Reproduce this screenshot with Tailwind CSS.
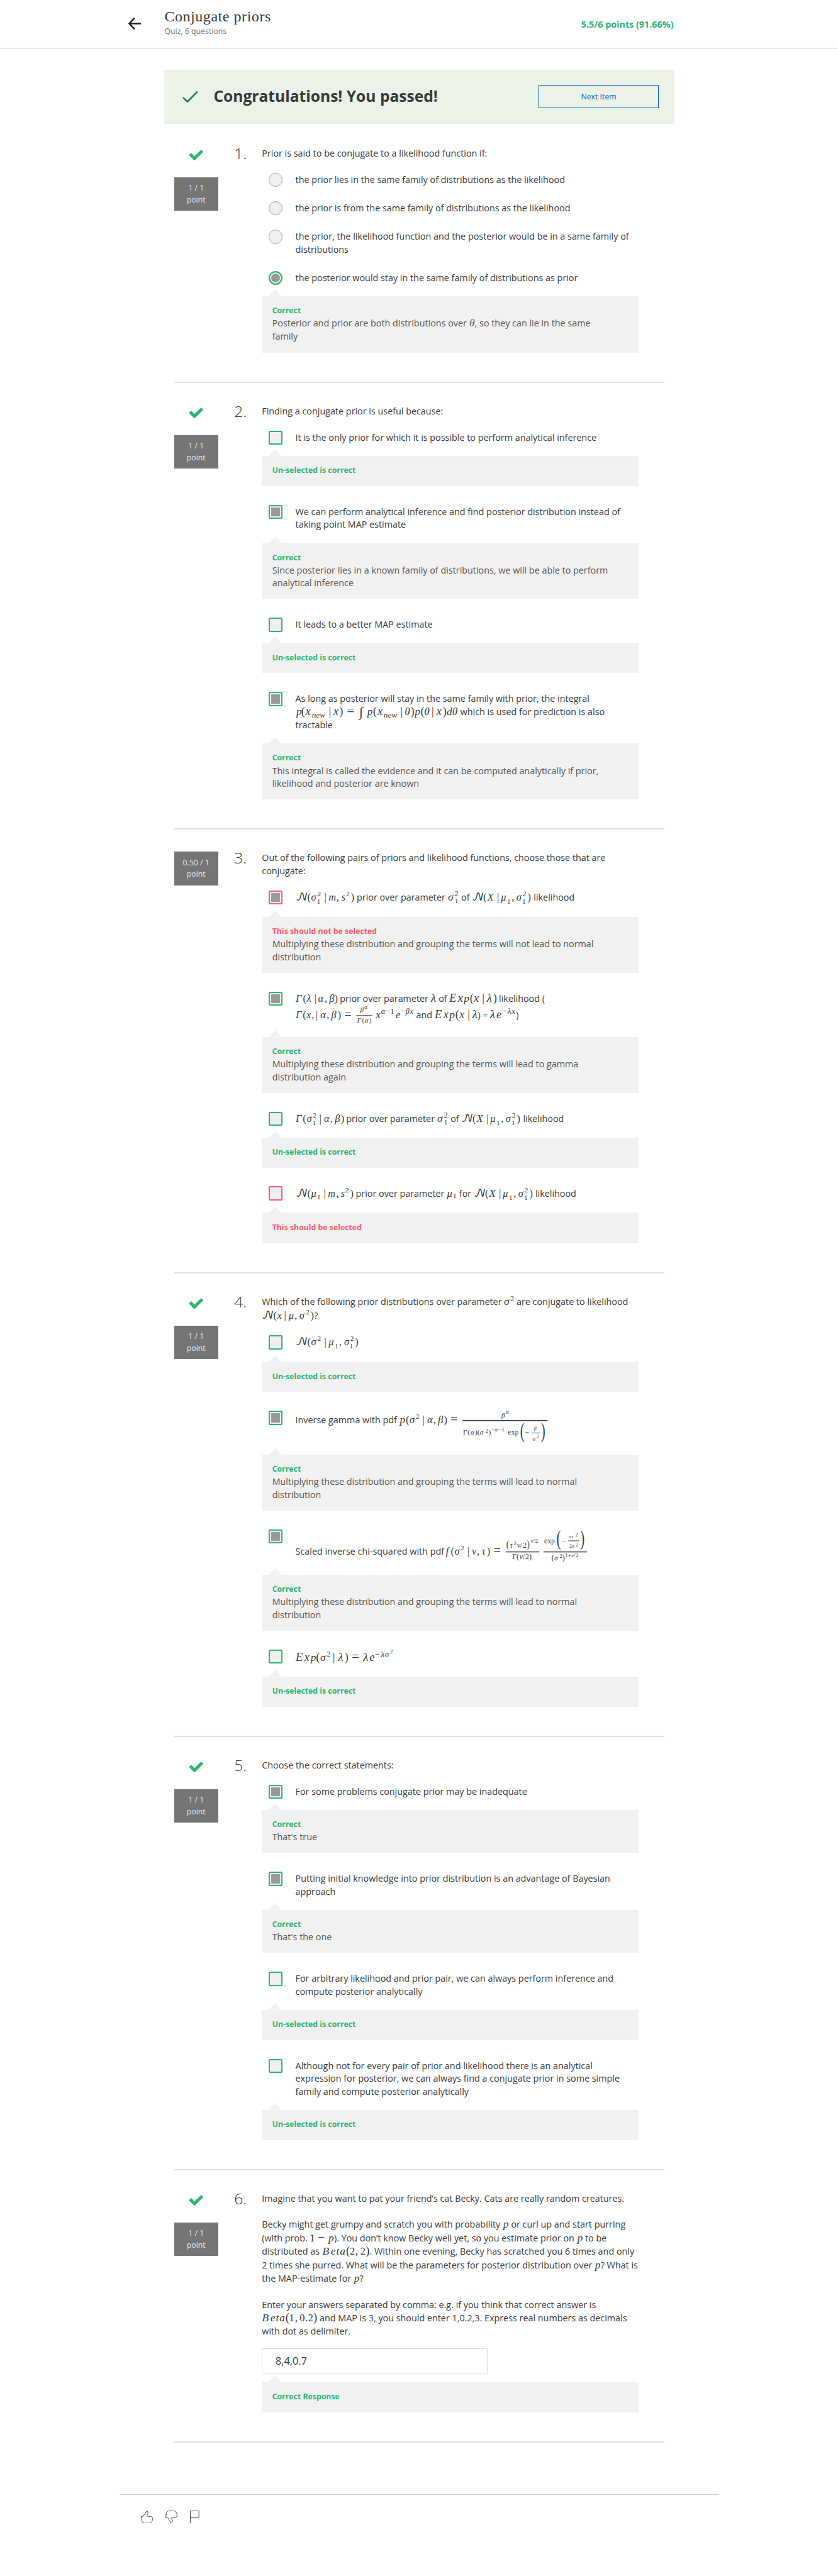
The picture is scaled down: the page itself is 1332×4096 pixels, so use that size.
<!DOCTYPE html>
<html lang="en">
<head>
<meta charset="utf-8">
<title>Conjugate priors</title>
<script src="https://cdn.jsdelivr.net/npm/@tailwindcss/browser@4"></script>
</head>
<body class="bg-white overflow-x-hidden">
<div class="[zoom:1.0254] w-[1299px] h-[3994px] overflow-hidden bg-white font-['Open_Sans',sans-serif] text-[14px] leading-[20px] text-[#373a3c]">

<header class="h-[74px] flex pl-[198px] pr-[255px] shadow-[0_1px_2px_rgba(0,0,0,0.45)]">
  <svg class="mt-[25px] w-[22px] h-[22px] shrink-0" viewBox="0 0 22 22" fill="none" stroke="#1f1f1f" stroke-width="2.5"><path d="M20.6 11.2H2.6M10.6 2.6 2.4 11.2l8.2 8.6"/></svg>
  <div class="ml-[35px]">
    <div class="mt-[13px] h-[26px] leading-[26px] text-[23.5px] tracking-[0.5px] font-['Source_Serif_Pro','Liberation_Serif',serif] whitespace-nowrap">Conjugate priors</div>
    <div class="mt-[1px] text-[12px] leading-[18px] text-[#757575]">Quiz, 6 questions</div>
  </div>
  <div class="ml-auto mt-[28px] font-bold text-[#2ab673]">5.5/6 points (91.66%)</div>
</header>

<div class="ml-[255px] mt-[34px] mb-[2px] w-[790px] h-[84px] bg-[#eaf3e6] flex items-center pl-[27px] pr-[24px]">
  <svg class="w-[26px] h-[20px] shrink-0" viewBox="0 0 26 20" fill="none" stroke="#1d7c50" stroke-width="2.5"><path d="M2 10.8 8.8 17.2 24.2 1.6"/></svg>
  <h1 class="ml-[23px] text-[24px] leading-[32px] font-bold whitespace-nowrap">Congratulations! You passed!</h1>
  <button class="ml-auto w-[186px] h-[36px] border border-[#0056be] text-[#1058c0] text-[12px] leading-[18px]">Next Item</button>
</div>

<main id="quiz" class="ml-[270px] w-[760px]"></main>

<footer class="mt-[80px] ml-[185px] w-[930px] border-t border-[#ccc] pt-[24px] pl-[33px] flex">
  <svg class="w-[19px] h-[20px]" viewBox="0 0 19 20" fill="none" stroke="#373a42" stroke-width=".9"><path d="M.4 9H3.4L9 .5C10.3 1.1 11 2.4 11 4 11 5.7 9.2 7 9.3 8.3 9.3 8.8 9.6 9 10.2 9H14.8C17 9 18 10.700 18 13 18 15.8 16.6 18.4 14.3 19.5H5.7C3.6 19.5 2 18.2 1.6 16.2Z"/></svg>
  <svg class="ml-[20px] w-[19px] h-[20px]" viewBox="0 0 19 20" fill="none" stroke="#373a42" stroke-width=".9"><g transform="matrix(1 0 0 -1 0 20)"><path d="M.4 9H3.4L9 .5C10.3 1.1 11 2.4 11 4 11 5.7 9.2 7 9.3 8.3 9.3 8.8 9.6 9 10.2 9H14.8C17 9 18 10.700 18 13 18 15.8 16.6 18.4 14.3 19.5H5.7C3.6 19.5 2 18.2 1.6 16.2Z"/></g></svg>
  <svg class="ml-[19px] w-[15px] h-[20px]" viewBox="0 0 15 20" fill="none" stroke="#373a42" stroke-width=".9"><path d="M.5 20V.5H13.8V10.3H.5"/></svg>
</footer>
</div>

<script>
const f = name => `<span data-f="${name}"></span>`;

// Answer marks
const marks = {
  radio: 'rounded-full border border-[#aaa] bg-[#efefef]',
  radioOn: 'rounded-full border-2 border-[#2ab673] bg-[#9a9a9a] shadow-[inset_0_0_0_2px_#efefef]',
  off: 'rounded-[2px] border-2 border-[#2ab673] bg-[#efefef]',
  on: 'rounded-[2px] border-2 border-[#2ab673] bg-[#9a9a9a] shadow-[inset_0_0_0_2px_#efefef]',
  badOff: 'rounded-[2px] border-2 border-[#ff5a6e] bg-[#efefef]',
  badOn: 'rounded-[2px] border-2 border-[#ff5a6e] bg-[#9a9a9a] shadow-[inset_0_0_0_2px_#efefef]',
};
// Answer row; height runs to the next row or feedback panel
const opt = (mark, height, text, pad = 'pt-px') =>
  `<div class="${height} flex pl-[10px]"><i class="w-[22px] h-[22px] shrink-0 ${marks[mark]}"></i><div class="ml-[20px] whitespace-nowrap ${pad}">${text}</div></div>`;
// Feedback panel with its pointer
const panel = (height, label, text = '', color = 'text-[#2ab673]') =>
  `<div class="relative ${height} bg-[#f1f1f1] pl-[16px] pt-[13px]"><i class="absolute left-[11px] -top-[10px] w-[20px] h-[10px] bg-[#f1f1f1] [clip-path:polygon(50%_0,100%_100%,0_100%)]"></i><div class="h-[19.6px] leading-[19px] text-[12px] font-bold ${color}">${label}</div><p class="text-[#555] whitespace-nowrap">${text}</p></div>`;
const gap = '<div class="h-[29px]"></div>';
const unselected = panel('h-[47px]', 'Un-selected is correct');
const red = 'text-[#ff5a6e]';

const questions = [
  { score: '1 / 1', body: [
    '<p class="h-[40px]">Prior is said to be conjugate to a likelihood function if:</p>',
    opt('radio', 'h-[44px]', 'the prior lies in the same family of distributions as the likelihood'),
    opt('radio', 'h-[44px]', 'the prior is from the same family of distributions as the likelihood'),
    opt('radio', 'h-[64px]', 'the prior, the likelihood function and the posterior would be in a same family of<br>distributions'),
    opt('radioOn', 'h-[39px]', 'the posterior would stay in the same family of distributions as prior'),
    panel('h-[88px]', 'Correct', `Posterior and prior are both distributions over ${f('theta')}, so they can lie in the same<br>family`),
  ]},
  { score: '1 / 1', body: [
    '<p class="h-[40px]">Finding a conjugate prior is useful because:</p>',
    opt('off', 'h-[39px]', 'It is the only prior for which it is possible to perform analytical inference'),
    unselected, gap,
    opt('on', 'h-[59px]', 'We can perform analytical inference and find posterior distribution instead of<br>taking point MAP estimate'),
    panel('h-[87px]', 'Correct', 'Since posterior lies in a known family of distributions, we will be able to perform<br>analytical inference'), gap,
    opt('off', 'h-[39px]', 'It leads to a better MAP estimate'),
    unselected, gap,
    opt('on', 'h-[80px]', `As long as posterior will stay in the same family with prior, the integral<br>${f('evidence')} which is used for prediction is also<br>tractable`, 'pt-px leading-[20.3px]'),
    panel('h-[87px]', 'Correct', 'This integral is called the evidence and it can be computed analytically if prior,<br>likelihood and posterior are known'),
  ]},
  { score: '0.50 / 1', partial: true, body: [
    '<p class="h-[60px] whitespace-nowrap">Out of the following pairs of priors and likelihood functions, choose those that are<br>conjugate:</p>',
    opt('badOn', 'h-[41px]', `${f('normalSigmaPrior')} prior over parameter ${f('sigma1sq')} of ${f('normalX')} likelihood`, 'pt-[1.6px]'),
    panel('h-[87px]', 'This should not be selected', 'Multiplying these distribution and grouping the terms will not lead to normal<br>distribution', red), gap,
    opt('on', 'h-[70px]', `<p>${f('gammaLambda')} prior over parameter ${f('lambda')} of ${f('expClosed')} likelihood (</p><p class="mt-[5.4px]">${f('gammaPdf')} and ${f('expOpen')}) = ${f('expPdf')})</p>`),
    panel('h-[87px]', 'Correct', 'Multiplying these distribution and grouping the terms will lead to gamma<br>distribution again'), gap,
    opt('off', 'h-[40px]', `${f('gammaSigma')} prior over parameter ${f('sigma1sq')} of ${f('normalX')} likelihood`),
    unselected, gap,
    opt('badOff', 'h-[41px]', `${f('normalMuPrior')} prior over parameter ${f('mu1')} for ${f('normalX')} likelihood`, 'pt-[1.6px]'),
    panel('h-[47px]', 'This should be selected', '', red),
  ]},
  { score: '1 / 1', body: [
    `<div class="h-[62px] whitespace-nowrap"><p>Which of the following prior distributions over parameter ${f('sigmaSq')} are conjugate to likelihood</p><p class="mt-[2px]">${f('normalx')}?</p></div>`,
    opt('off', 'h-[41px]', f('normalSigmaMu')),
    unselected, gap,
    opt('on', 'h-[68px]', `Inverse gamma with pdf ${f('inverseGamma')}`, 'pt-[5px]'),
    panel('h-[87px]', 'Correct', 'Multiplying these distribution and grouping the terms will lead to normal<br>distribution'), gap,
    opt('on', 'h-[70px]', `Scaled inverse chi-squared with pdf${f('scaledChi')}`, 'pt-[24.6px]'),
    panel('h-[87px]', 'Correct', 'Multiplying these distribution and grouping the terms will lead to normal<br>distribution'), gap,
    opt('off', 'h-[42px]', f('expSigma'), 'pt-[3px]'),
    unselected,
  ]},
  { score: '1 / 1', body: [
    '<p class="h-[40px]">Choose the correct statements:</p>',
    opt('on', 'h-[39px]', 'For some problems conjugate prior may be inadequate'),
    panel('h-[67px]', 'Correct', "That's true"), gap,
    opt('on', 'h-[59px]', 'Putting initial knowledge into prior distribution is an advantage of Bayesian<br>approach'),
    panel('h-[67px]', 'Correct', "That's the one"), gap,
    opt('off', 'h-[59px]', 'For arbitrary likelihood and prior pair, we can always perform inference and<br>compute posterior analytically'),
    unselected, gap,
    opt('off', 'h-[79px]', 'Although not for every pair of prior and likelihood there is an analytical<br>expression for posterior, we can always find a conjugate prior in some simple<br>family and compute posterior analytically'),
    unselected,
  ]},
  { score: '1 / 1', body: [
    `<div class="h-[242.5px] whitespace-nowrap">
      <p class="h-[39.5px]">Imagine that you want to pat your friend’s cat Becky. Cats are really random creatures.</p>
      <p class="h-[125.5px] leading-[21px]">Becky might get grumpy and scratch you with probability ${f('p')} or curl up and start purring<br>(with prob. ${f('oneMinusP')}). You don’t know Becky well yet, so you estimate prior on ${f('p')} to be<br>distributed as ${f('beta22')}. Within one evening, Becky has scratched you 6 times and only<br>2 times she purred. What will be the parameters for posterior distribution over ${f('p')}? What is<br>the MAP-estimate for ${f('p')}?</p>
      <p class="leading-[20.4px]">Enter your answers separated by comma: e.g. if you think that correct answer is<br>${f('beta102')} and MAP is 3, you should enter 1,0.2,3. Express real numbers as decimals<br>with dot as delimiter.</p>
    </div>
    <div class="w-[350px] h-[39px] border border-[#dcdcdc] pl-[20px] text-[16px] leading-[38px]">8,4,0.7</div>
    <div class="h-[13px]"></div>`,
    panel('h-[47px]', 'Correct Response'),
  ]},
];

const check = '<div class="h-[47px] pt-[4px] flex justify-center items-start"><svg class="w-[23px] h-[17px]" viewBox="0 0 22.5 17" fill="#2ab673" stroke="#2ab673" stroke-width=".8" stroke-linejoin="round"><path d="M3.7 5.4 8.7 10.4 19.2.4 22.1 3.4 8.7 16.6.4 8.4Z"/></svg></div>';

document.getElementById('quiz').innerHTML = questions.map((q, n) => `
<section class="flex pt-[34px] pb-[45px] border-b-2 border-[#e0e0e0]">
  <div class="w-[68px] shrink-0">${q.partial ? '' : check}
    <div class="h-[52px] pt-[8px] bg-[#757575] text-[#e9e9e9] text-[12px] leading-[18px] text-center">${q.score}<br>point</div>
  </div>
  <div class="ml-[25px] w-[43px] shrink-0 text-[24px] leading-[20px] font-light">${n + 1}.</div>
  <div class="w-[584px]">${q.body.join('')}</div>
</section>`).join('');

// Formula tokens: style+size  x  y(from baseline, down positive)  text  [x-scale]
// styles: i = italic serif, r = upright serif, s = script; "bar x y w h" is a fraction rule.
const N = 's17 0 0 𝒩;r16 18.1 0 (;';
const formulas = {
  theta: [8.8, 'i17 0 0 θ'],
  p: [9.4, 'i17 0.8 0 p'],
  lambda: [8.5, 'i18 0 0 λ'],
  evidence: [252, 'i17 1 0 p;r18 8.5 0 (;i18 15 0 x;i13 25 4 new;r18 51.2 0 |;i18 58.4 0 x;r18 67.5 0 );r20 79.6 0 =;i21 98.5 1.5 ∫;i17 111 0 p;r18 119.9 0 (;i18 126.7 0 x;i13 136.3 4 new;r18 162.3 0 |;i17 169 0 θ;r18 178 0 );i17 184.6 0 p;r18 193.5 0 (;i17 199.3 0 θ;r18 210.6 0 |;i18 218.2 0 x;r18 228 0 );i17 234 0 d;i17 242.6 0 θ'],
  normalSigmaPrior: [91.4, N + 'i16 24 0 σ;r11 33.7 -6.5 2;r11 32.8 4.9 1;r16 44.3 0 |;i16 51 0 m;r16 63.5 0 ,;i16 71 0 s;r11 78 -6.5 2;r16 85.5 0 )'],
  sigma1sq: [17.3, 'i17 0 0 σ;r12 10.2 -7 2;r11 10.6 4.2 1'],
  normalX: [92, 's17 0 0 𝒩;r16 17.6 0 (;i16 24 0 X;r16 39 0 |;i16 45 0 μ;r11 54.5 4.9 1;r16 61.8 0 ,;i16 69 0 σ;r11 78.8 -6.5 2;r11 78 4.9 1;r16 86.3 0 )'],
  normalMuPrior: [90, N + 'i16 24 0 μ;r11 33.2 4.2 1;r16 43.3 0 |;i16 50 0 m;r16 62.8 0 ,;i16 70 0 s;r11 77 -6.5 2;r16 84.3 0 )'],
  mu1: [15.6, 'i16 0.5 0 μ;r11 9.8 2 1'],
  gammaLambda: [65.2, 'i16 0 0 Γ;r16 11.3 0 (;i16 17 0 λ;r16 29 0 |;i16 34.7 0 α;r16 44.9 0 ,;i16 52 0 β;r16 60 0 )'],
  expClosed: [73.2, 'i18 0 0 E;i18 13.3 0 x;i17 22.7 0 p;r18 32 0 (;i18 38 0 x;r18 51 0 |;i18 58.2 0 λ;r18 68 0 )'],
  expOpen: [67, 'i18 0 0 E;i18 13.3 0 x;i17 22.7 0 p;r18 32 0 (;i18 38 0 x;r18 51 0 |;i18 58.2 0 λ'],
  expPdf: [40, 'i18 0 0 λ;i18 9.7 0 e;r13 18 -7 −;i13 27 -7 λ;i12 33.4 -7 x'],
  gammaPdf: [183.5, 'i16 0 0 Γ;r16 11 0 (;i16 16.6 0 x;r16 24.6 0 ,;r16 31 0 |;i16 38.3 0 α;r16 48 0 ,;i16 55 0 β;r16 65 0 );r19 75.5 0 =;bar 94 -4.6 25 1;i11 100 -9.6 β;i9 106.4 -14.5 α;i11 95 7.1 Γ;r11 103 7.1 (;i11 106.8 7.1 α;r11 113.8 7.1 );i16 124 0 x;i12 132.5 -6.5 α;r12 139.3 -6.5 −;r12 146.8 -6.5 1;i16 155 0 e;r12 163.3 -6.5 −;i12 170.4 -6.5 β;i12 177 -6.5 x'],
  gammaSigma: [75, 'i16 0 0 Γ;r16 11 0 (;i16 17 0 σ;r11 26.5 -6.5 2;r11 25.8 4.7 1;r16 36.7 0 |;i16 43.9 0 α;r16 53.5 0 ,;i16 60.7 0 β;r16 70 0 )'],
  sigmaSq: [15.6, 'i17 0 0 σ;r12 9.8 -5.6 2'],
  normalx: [81, N + 'i16 24 0 x;r16 34.6 0 |;i16 41.8 0 μ;r16 51 0 ,;i16 58.2 0 σ;r11 68.4 -6.5 2;r16 75.7 0 )'],
  normalSigmaMu: [97.5, N + 'i16 24 0 σ;r11 33.7 -6.5 2;r16 44.3 0 |;i16 51 0 μ;r11 60.7 4.5 1;r16 67.4 0 ,;i16 75 0 σ;r11 84.7 -6.5 2;r11 83.7 5 1;r16 92 0 )'],
  inverseGamma: [230, 'i17 0.5 0 p;r16 9.7 0 (;i16 15.6 0 σ;r11 25 -6.5 2;r16 35.7 0 |;i16 42.9 0 α;r16 52.3 0 ,;i16 59.7 0 β;r16 68.7 0 );r20 79 0 =;bar 97.5 -5 132 1.6;i11 158 -9 β;i9 164.5 -14.5 α;r11 98.5 17.6 Γ;r11 105.5 17.6 (;i11 110.2 17.6 α;r11 117 17.6 );r11 120.7 17.6 (;i11 124.5 17.6 σ;r9 133 14.5 2;r11 138 17.6 );r9 142.3 12.3 −;i9 147.5 12.3 α;r9 153 12.3 −;r9 158.2 12.3 1;r11.5 168 17.6 exp;r33 187 22 ( .62;r11.5 194.5 17.6 −;i8 208.5 10.5 β;bar 204.6 14.6 13.3 1;i9 206 26.8 σ;r8 212.2 23.4 2;r33 219.3 22 ) .62'],
  scaledChi: [221.5, 'i17 2.5 0 f;r16 10.2 0 (;i16 16 0 σ;r11 25.5 -7 2;r16 36.2 0 |;i16 42.9 0 ν;r16 51 0 ,;i16 58.2 0 τ;r16 66 0 );r20 76.5 0 =;bar 95.4 -5 52 1.4;bar 154 -5 67.4 1.4;r16 96.4 -10.5 ( .8;i11.5 102 -10.5 τ;r9 107.7 -15 2;i11.5 112.8 -10.5 ν;r11.5 117.5 -10.5 /;r11.5 121.8 -10.5 2;r16 128.2 -10.5 ) .8;i9 134.2 -18.5 ν;r9 138.3 -18.5 /;r9 141 -18.5 2;r11.5 105.6 6.7 Γ;r11.5 112.4 6.7 (;i11.5 116.8 6.7 ν;r11.5 121.7 6.7 /;r11.5 125.8 6.7 2;r11.5 131.7 6.7 );r11.5 155 -17.6 exp;r33 174 -14.6 ( .62;r11.5 182 -17.6 −;i8 193.6 -25 ν;i8 197.5 -25 τ;r8 203 -28 2;bar 192.3 -22 16.8 1;r8 193.8 -10.3 2;i8 197.7 -10.3 σ;r8 203.6 -13 2;r33 211 -14.6 ) .62;r13 166.3 9 (;i11 170.6 9 σ;r9 178.6 5 2;r13 182.9 9 );r9 187.5 4.2 1;r9 191.8 4.2 +;i9 197 4.2 ν;r9 200.9 4.2 /;r9 203.6 4.2 2'],
  expSigma: [150, 'i18 0 0 E;i18 13.5 0 x;i17 23.2 0 p;r18 31.5 0 (;i17 38 0 σ;r11.5 48.3 -6.5 2;r18 57.3 0 |;i18 65.8 0 λ;r18 75.8 0 );r20 87 0 =;i18 104.6 0 λ;i18 114.3 0 e;r13 123 -6 −;i13 132 -6 λ;i12 138.4 -6 σ;r9 146 -11.6 2'],
  oneMinusP: [37.6, 'r17 0 0 1;r19 13 0 −;i17 29.3 0 p'],
  beta22: [73.8, 'i17 0.5 0 B;i17 13.5 0 e;i17 22 0 t;i17 27.5 0 a;r18 37 0 (;r16 43 0 2;r17 51.5 0 ,;r16 59.2 0 2;r18 67.5 0 )'],
  beta102: [85.8, 'i17 0.5 0 B;i17 13.5 0 e;i17 22 0 t;i17 27.5 0 a;r18 36.7 0 (;r16 42.5 0 1;r17 51.5 0 ,;r16 58.7 0 0;r17 67.3 0 .;r16 72 0 2;r18 80 0 )'],
};
const styles = {
  i: "italic font-['Liberation_Serif',serif]",
  r: "font-['Liberation_Serif',serif]",
  s: "font-['DejaVu_Math_TeX_Gyre','STIX_Two_Math','Liberation_Serif',serif]",
};
for (const el of document.querySelectorAll('[data-f]')) {
  const [w, src] = formulas[el.dataset.f];
  const parts = src.split(';').map(t => {
    const [k, x, y, a, b] = t.split(' ');
    if (k === 'bar') return `<rect x="${x}" y="${+y + 1}" width="${a}" height="${b}"/>`;
    return `<text transform="translate(${x} ${+y + 1}) scale(${b || 1} 1)" class="${styles[k[0]]}" font-size="${k.slice(1)}">${a}</text>`;
  });
  el.innerHTML = `<svg class="inline align-baseline overflow-visible h-px" fill="currentColor" width="${w}" height="1">${parts.join('')}</svg>`;
}
</script>
</body>
</html>
